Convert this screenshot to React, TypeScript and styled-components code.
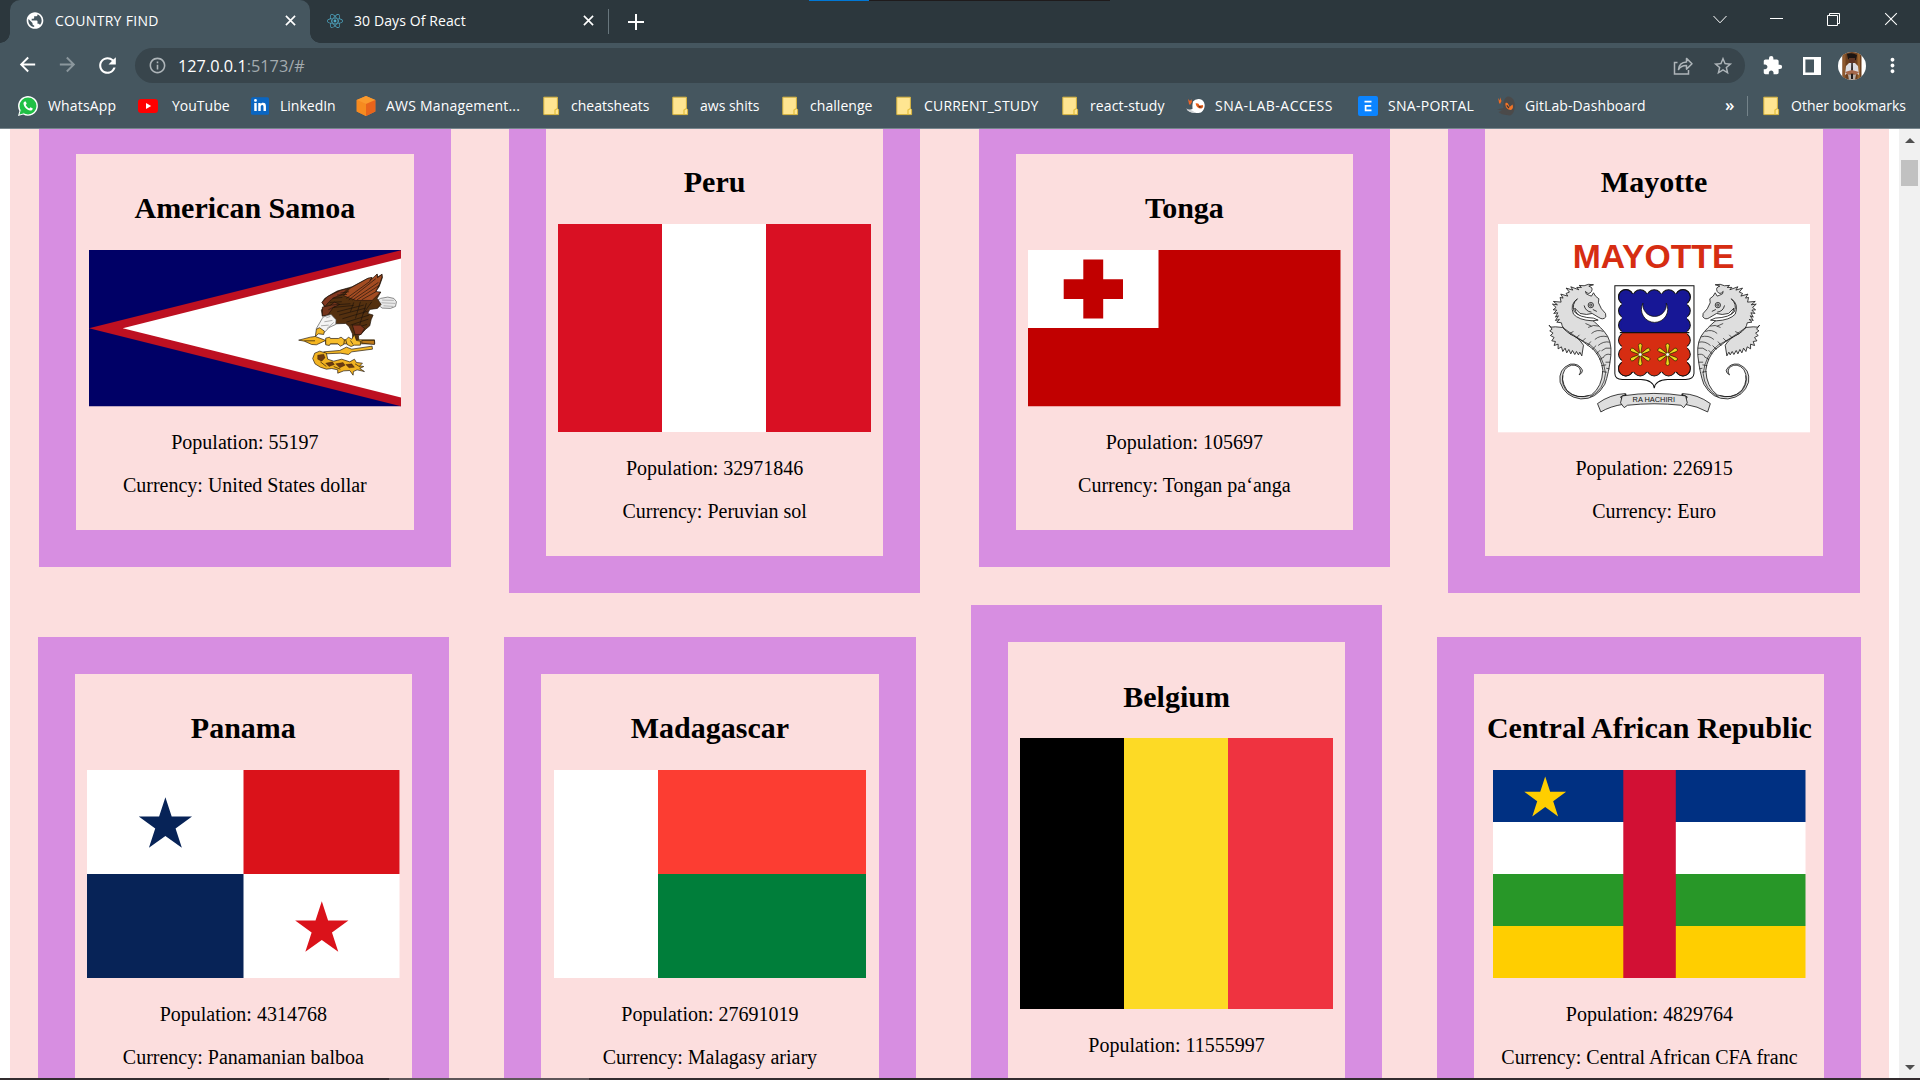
import React from 'react';
import styled, { createGlobalStyle } from 'styled-components';
import {
  MdPublic, MdArrowBack, MdArrowForward, MdRefresh, MdInfoOutline,
  MdStarBorder, MdExtension, MdMoreVert,
} from 'react-icons/md';
import { FaReact, FaLinkedinIn } from 'react-icons/fa';

const GlobalStyle = createGlobalStyle`
  * { box-sizing: border-box; }
  html, body { margin: 0; padding: 0; overflow: hidden; background: #fff; }
`;

const Window = styled.div`
  width: 1920px;
  height: 1080px;
  display: flex;
  flex-direction: column;
  overflow: hidden;
  font-family: 'Open Sans', 'Noto Sans', sans-serif;
  color: #fff;
  background: #fff;
`;

/* ---------- tab strip ---------- */

const TabStrip = styled.div`
  position: relative;
  display: flex;
  flex: none;
  height: 43px;
  padding-left: 10px;
  background: #2c373d;
`;

const TopEdge = styled.div`
  position: absolute;
  top: 0;
  left: 809px;
  width: 301px;
  height: 1px;
  background: linear-gradient(to right, #0078d7 60px, #1f1b1c 60px);
`;

const Tab = styled.div<{ $active?: boolean; $width: number }>`
  position: relative;
  display: flex;
  align-items: center;
  width: ${(p) => p.$width}px;
  height: 43px;
  padding: 0 10px 2px 15px;
  font-size: 14px;
  border-radius: 10px 10px 0 0;
  background: ${(p) => (p.$active ? '#45565f' : 'transparent')};
  ${(p) => p.$active && `
    &::before, &::after {
      content: '';
      position: absolute;
      bottom: 0;
      width: 10px;
      height: 10px;
    }
    &::before { left: -10px; background: radial-gradient(circle at 0 0, transparent 9.5px, #45565f 10px); }
    &::after { right: -10px; background: radial-gradient(circle at 100% 0, transparent 9.5px, #45565f 10px); }
  `}
`;

const Favicon = styled.span`
  display: flex;
  width: 20px;
  justify-content: center;
  svg { display: block; }
`;

const TabTitle = styled.span<{ $ls?: number; $gap: number }>`
  flex: 1;
  margin-left: ${(p) => p.$gap}px;
  white-space: nowrap;
  letter-spacing: ${(p) => p.$ls ?? 0}px;
`;

const TabDivider = styled.div`
  width: 1px;
  height: 25px;
  margin: 9px 0 0 0;
  background: #68767d;
`;

const NewTab = styled.div`
  display: flex;
  width: 54px;
  height: 43px;
  align-items: center;
  justify-content: center;
`;

const WindowControls = styled.div`
  display: flex;
  margin-left: auto;
  height: 38px;
`;

const Control = styled.div`
  display: flex;
  width: 57.2px;
  align-items: center;
  justify-content: center;
  svg { display: block; }
`;

/* ---------- toolbar ---------- */

const Toolbar = styled.div`
  display: flex;
  flex: none;
  align-items: center;
  height: 45px;
  background: #45565f;
`;

const NavButtons = styled.div`
  display: flex;
  width: 135px;
  padding-left: 7px;
`;

const NavButton = styled.div<{ $dim?: boolean }>`
  display: flex;
  width: 40px;
  justify-content: center;
  color: ${(p) => (p.$dim ? '#8b979d' : '#fff')};
`;

const Omnibox = styled.div`
  display: flex;
  align-items: center;
  width: 1610px;
  height: 35px;
  padding: 0 11px 0 13px;
  border-radius: 18px;
  background: #38454c;
  color: #aeb5b9;
  svg { flex: none; display: block; }
`;

const Url = styled.div`
  flex: 1;
  margin-left: 11px;
  font-size: 16.3px;
  color: #a3abaf;
  b { font-weight: 400; color: #fff; }
`;

const OmniboxActions = styled.div`
  display: flex;
  align-items: center;
  gap: 18px;
`;

const ToolbarActions = styled.div`
  display: flex;
  align-items: center;
  flex: 1;
  padding-left: 7px;
`;

const ActionSlot = styled.div`
  display: flex;
  width: 40px;
  justify-content: center;
  svg { display: block; }
`;

/* ---------- bookmarks ---------- */

const BookmarkBar = styled.div`
  display: flex;
  flex: none;
  height: 41px;
  padding: 0 0 5px 18px;
  align-items: center;
  background: #45565f;
  border-bottom: 1px solid #77868d;
`;

const Bookmark = styled.div<{ $width: number }>`
  display: flex;
  flex: none;
  align-items: center;
  width: ${(p) => p.$width}px;
  height: 35px;
`;

const BookmarkIcon = styled.span<{ $slot: number }>`
  flex: none;
  width: ${(p) => p.$slot}px;
  svg { display: block; }
`;

const BookmarkLabel = styled.span<{ $ls?: number }>`
  font-size: 14px;
  line-height: 20px;
  letter-spacing: ${(p) => p.$ls ?? 0}px;
  white-space: nowrap;
`;

const Overflow = styled.div`
  width: 22px;
  padding-bottom: 3px;
  font-size: 17px;
  font-weight: 600;
`;

const BarDivider = styled.div`
  width: 1px;
  height: 20px;
  margin-right: 15px;
  background: #74838a;
`;

/* ---------- page ---------- */

const Viewport = styled.div`
  display: flex;
  flex: none;
  height: 949px;
  overflow: hidden;
  background: #fff;
`;

const Countries = styled.div`
  display: flex;
  flex: none;
  flex-wrap: wrap;
  align-content: flex-start;
  align-items: center;
  justify-content: space-around;
  row-gap: 12.5px;
  width: 1879px;
  height: 1100px;
  margin: -38px 10px 0;
  background: #fcdede;
`;

const Backdrop = styled.div`
  width: 1899px;
`;

const Card = styled.article`
  padding: 12.5px;
  border: 37px solid #d78ee1;
  font-family: 'Liberation Serif', 'Times New Roman', serif;
  text-align: center;
  color: #000;
`;

const CountryName = styled.h2`
  margin: 24.9px 0;
  font-size: 30px;
  line-height: 34px;
  font-weight: 700;
  white-space: nowrap;
`;

const FlagFrame = styled.div<{ $height: number }>`
  width: 312.5px;
  height: ${(p) => p.$height}px;
  margin: 0 auto 24.6px;
  svg { display: block; width: 100%; height: 100%; }
`;

const Fact = styled.p`
  min-height: 23px;
  margin: 20px 0;
  font-size: 20px;
  line-height: 23px;
  white-space: nowrap;
`;

const Scrollbar = styled.div`
  display: flex;
  flex-direction: column;
  align-items: center;
  justify-content: space-between;
  width: 21px;
  height: 949px;
  padding: 9px 0 8px;
  background: #f1f1f1;
`;

const ScrollTop = styled.div`
  display: flex;
  flex-direction: column;
  align-items: center;
  gap: 17px;
`;

const Arrow = styled.div<{ $down?: boolean }>`
  width: 0;
  height: 0;
  border-left: 5px solid transparent;
  border-right: 5px solid transparent;
  ${(p) => (p.$down ? 'border-top' : 'border-bottom')}: 5px solid #505050;
`;

const Thumb = styled.div`
  width: 17px;
  height: 26px;
  background: #c1c1c1;
`;

const BottomEdge = styled.div`
  flex: none;
  height: 2px;
  background: linear-gradient(to right, #332c2f 389px, #5e5659 389px, #5e5659 589px, #332c2f 589px);
`;

/* ---------- icons ---------- */

const Cross = ({ size, weight }: { size: number; weight: number }) => (
  <svg width={size} height={size} viewBox="0 0 12 12" fill="none" stroke="#fff" strokeWidth={weight}>
    <path d="M1 1L11 11M11 1L1 11" />
  </svg>
);

const FolderIcon = () => (
  <svg width="17" height="20" viewBox="0 0 17 20">
    <path d="M.8 1.2H14.4V12.5L15.6 13.5V18.6H.8Z" fill="#ffe591" stroke="#d9b640" strokeWidth="1" />
    <path d="M12 18.4V14L14.4 12.6" fill="none" stroke="#e5bf3c" strokeWidth="1.2" />
  </svg>
);

const WhatsAppIcon = () => (
  <svg width="20" height="20" viewBox="0 0 20 20">
    <path d="M0 20L1.4 14.9A9.9 9.9 0 1 1 5.2 18.6Z" fill="#fff" />
    <circle cx="10" cy="10" r="8.5" fill="#20c045" />
    <path d="M1.6 18.4L2.7 14L6 17.3Z" fill="#20c045" />
    <path d="M7 5.4C6 5.5 5.4 6.6 5.5 7.7C6 11 9 14 12.2 14.6C13.6 14.7 14.8 13.7 14.8 12.4L12.5 11.2L11.4 12.5C9.6 11.8 8.4 10.6 7.7 9L8.7 7.8L7.8 5.5Z" fill="#fff" />
  </svg>
);

const YouTubeIcon = () => (
  <svg width="20" height="20" viewBox="0 0 20 20">
    <rect x="0" y="3" width="20" height="14" rx="3.2" fill="#f00" />
    <path d="M8 7L13.2 10L8 13Z" fill="#fff" />
  </svg>
);

const LinkedInIcon = () => (
  <svg width="20" height="20" viewBox="0 0 20 20">
    <rect x="1" y="1.2" width="18" height="17.6" rx="1.5" fill="#0a66c2" />
    <FaLinkedinIn x="3.2" y="3" size={13.6} color="#fff" />
  </svg>
);

const AwsIcon = () => (
  <svg width="20" height="20" viewBox="0 0 20 20">
    <path d="M10 0L19.3 4V15.6L10 20L.7 15.6V4Z" fill="#f58536" />
    <path d="M10 0L19.3 4L10 8L.7 4Z" fill="#fa9a2c" />
    <path d="M10 8L19.3 4V15.6L10 20Z" fill="#e8641b" />
    <path d="M.7 4L10 8V20L.7 15.6Z" fill="#f68b1f" />
  </svg>
);

const BirdIcon = ({ dark }: { dark?: boolean }) => (
  <svg width="20" height="20" viewBox="0 0 20 20">
    {dark ? (
      <>
        <path d="M12 .5C17 1 19 5 18.8 10S17 19 13.5 19.5C9 18.5 6 19 2.5 16L6 14.5L1 13.5L7.5 12C7 7 8 1.5 12 .5Z" fill="#4b4a4a" />
        <path d="M2.2 2L4 4.5V1.2L5.5 5L4 8L3 6.8Z" fill="#f26a21" />
        <path d="M9.5 7C11.5 6 12.5 8 13.5 11L16.5 8.5C17.5 11 17 13 15 14C11.5 14 8.8 11 9.5 7Z" fill="#f37426" />
        <path d="M10.8 9.3L13 12" stroke="#3b3433" strokeWidth="1.2" />
      </>
    ) : (
      <>
        <path d="M7 5.5Q9 2.8 13 3Q18 3.6 18.7 9Q18.8 14 15 16.4Q7 18 1 14.5L6.5 13Q6 9 7 5.5Z" fill="#fff" />
        <path d="M2 3L4 5L5.5 3.2L6 6L4 9L3 8Z" fill="#f06529" />
        <path d="M9.5 7.5Q12.5 6.5 13.5 9.5L16.8 9Q18 11 15.5 12.5Q11 13 9.5 7.5Z" fill="#e8601c" />
        <path d="M12 9.4L16.5 11L13.5 11.8Z" fill="#5d2c1a" />
        <path d="M0 12.5L6 14.5L10 17Q4 17.6 0 12.5Z" fill="#cfd3d5" />
      </>
    )}
  </svg>
);

const PortalIcon = () => (
  <svg width="20" height="20" viewBox="0 0 20 20">
    <rect width="20" height="20" rx="2" fill="#0b84ff" />
    <path d="M6.5 5.7H13.5M6.8 9.8H13.2M7.6 9V14.3H13.5" fill="none" stroke="#fff" strokeWidth="1.7" />
  </svg>
);

const ShareIcon = () => (
  <svg width="21" height="20" viewBox="0 0 21 20" fill="none" stroke="#aeb5b9" strokeWidth="1.5">
    <path d="M4.5 6.5H1.5V18H15.5V14" />
    <path d="M5.5 13.5C6 8.5 9 6.2 13.5 6V2.4L19 7.8L13.5 13.1V9.6C10 9.5 7.5 10.5 5.5 13.5Z" strokeLinejoin="round" />
  </svg>
);

const Avatar = () => (
  <svg width="28" height="28" viewBox="0 0 28 28">
    <defs>
      <clipPath id="avatar"><circle cx="14" cy="14" r="14" /></clipPath>
    </defs>
    <g clipPath="url(#avatar)">
      <rect width="28" height="28" fill="#fff" />
      <rect x="4.5" width="19" height="28" fill="#6d401f" />
      <rect x="4.5" width="3" height="28" fill="#8d592f" />
      <rect x="19.5" width="2.5" height="28" fill="#9a642f" />
      <path d="M9 2Q14 0 19 3L18 8Q14 10 10 7Z" fill="#1c1513" />
      <path d="M11 6H17V10L14 12L11 10Z" fill="#5d3525" />
      <path d="M8 14L11 11H17L20 14L21 23L18 21H10L7 23Z" fill="#dcdde2" />
      <path d="M13.3 11H14.8L15 20H13Z" fill="#2a2422" />
      <path d="M7 20L14 18L21 20L18 23L14 21L10 23Z" fill="#a5674a" />
      <path d="M10 22.5H18L17 28H11Z" fill="#b5aca6" />
      <path d="M13 22H15V27H13Z" fill="#201b1a" />
    </g>
  </svg>
);

/* ---------- flags ---------- */

const star = (cx: number, cy: number, r: number) =>
  Array.from({ length: 10 }, (_, i) => {
    const a = -Math.PI / 2 + (i * Math.PI) / 5;
    const d = i % 2 ? r * 0.382 : r;
    return `${(cx + d * Math.cos(a)).toFixed(2)},${(cy + d * Math.sin(a)).toFixed(2)}`;
  }).join(' ');

const SamoaFlag = () => (
  <svg viewBox="-573 15 936 468" preserveAspectRatio="none">
    <rect x="-573" y="15" width="936" height="468" fill="#006" />
    <path d="M363 15L-573 249L363 483Z" fill="#bd1021" />
    <path d="M363 40L-472 249L363 457Z" fill="#fff" />
    <g stroke="#1d120a" strokeWidth="2" strokeLinejoin="round">
      <path d="M287 168L300 160L322 156L340 160L348 170L345 184L330 190L305 189L294 180Z" fill="#e9e9e9" stroke="#555" />
      <path d="M305 165L340 166M303 173L344 175M309 182L338 184" stroke="#999" fill="none" />
      <path d="M125 172L133 160L152 148L170 138L198 130L215 125L262 100L274 98L278 104L290 88L292 96L304 88L306 97L296 125L284 142L301 141L290 160L302 178L291 190L268 193L262 205L278 210L272 224L268 242L256 252L243 266L234 272L236 292L218 290L216 266L206 244L196 235L166 236L164 222L146 208L126 213L123 195L132 184Z" fill="#54300f" />
      <path d="M190 152L208 130L262 100L275 97L268 107L290 87L291 98L305 88L304 98L296 120L286 139L300 142L275 166L226 166Z" fill="#a34c22" />
      <path d="M125 172L142 154L180 136L203 130L184 149L160 158L146 170L134 184Z" fill="#823820" />
      <path d="M126 186L150 181L162 171L178 178L158 188L143 209L126 213Z" fill="#74351c" />
      <path d="M198 160L270 108M205 165L286 101M216 165L294 112M230 164L296 121M244 164L288 139M180 144L206 140M170 150L200 148M156 160L186 157M148 172L184 170M150 180L210 176M160 187L220 181M170 200L250 180M176 210L256 189M186 221L262 198M198 231L266 210M210 240L264 222M218 250L260 238M144 194L164 184M220 172L210 200M240 170L225 220M258 174L238 238M274 170L248 206" fill="none" />
      <path d="M216 240L224 268L242 268L252 250L240 240Z" fill="#7f351d" />
      <path d="M128 216L152 208L167 224L166 238L146 247L132 262L114 260L108 250Z" fill="#f4f4f4" stroke="#555" />
      <path d="M138 218L150 214M132 230L156 226M122 242L145 240M140 250L160 232" stroke="#888" fill="none" />
      <path d="M108 252L118 248L132 258L130 268L114 266L105 274Z" fill="#f4b929" />
      <path d="M55 285L90 276L105 274L136 286L108 299L94 298L72 288Z" fill="#f5b51f" />
      <path d="M136 284H282L283 296H136Z" fill="#e8ac20" />
      <path d="M136 279L148 276L150 280H174L182 276L192 284L190 298L180 303L172 296H150L147 301L136 299Z" fill="#f7bd2c" />
      <path d="M196 284L204 276L214 282L222 268L228 286L240 288V300L222 300L212 304L200 298Z" fill="#f7bd2c" />
      <path d="M244 286H282L282 298L244 294Z" fill="#c07c1c" />
      <path d="M130 320L178 316L198 306L214 312L275 303L276 312L214 320L204 328L180 324L134 326Z" fill="#f5b827" />
      <path d="M97 340L103 324L118 318L138 324L142 342L160 348L184 342L208 350L222 342L228 352L246 354L238 362L250 364L238 370L252 379L230 374L219 379L218 390L208 376L190 377L172 384L172 374L154 370L138 372L120 366L104 356Z" fill="#f2b322" />
      <path d="M112 330L130 327L134 338L124 348L112 342ZM136 354L156 350L162 358L146 364ZM166 356L188 352L194 360L178 368ZM196 358L214 356L222 366L206 368Z" fill="#6b3a12" strokeWidth="1" />
      <path d="M72 287H104M210 286L218 298M120 350L138 364M160 364L180 372M224 356L240 366" fill="none" />
    </g>
  </svg>
);

const Seahorse = () => (
  <g fill="#dedede" stroke="#111" strokeWidth="2.4" strokeLinejoin="round">
    <path d="M57 285L62 291L76 290L98 292Q112 302 120 312Q140 316 160 345L155 377L149 366L145 374L139 364L134 373L127 361L122 371L116 358L110 368L105 354L98 364L94 350L84 356L84 342L72 346L76 334L65 332L72 322L61 316L69 309L59 302L66 297Z" />
    <path d="M190 164Q174 160 162 167L147 166L154 172L140 172L146 179L122 170L128 180L108 174L118 186L108 190L113 198L92 192L99 204L90 202L93 216L70 214L82 224L67 222L78 232L69 239L80 240L71 250L83 248L76 261L85 257L76 271L88 268L80 276L94 278Q96 296 118 310Q160 332 190 358Q214 384 218 420Q216 470 184 494Q140 510 110 480Q88 446 104 418Q124 396 145 410Q156 422 147 434Q158 428 157 420Q146 398 120 402Q84 416 90 456Q104 500 152 506Q198 508 224 462Q236 430 242 376Q246 330 222 304Q200 280 186 270L165 264Q136 256 134 234L150 250Q170 256 186 250L206 262Q219 271 227 260L226 250Q212 238 205 218L206 206L196 198L190 188L184 198L178 196Q164 192 166 184Q176 196 184 184Q190 172 176 168Z" />
    <path d="M142 206Q124 222 132 244Q146 262 190 264L204 270L186 272Q146 270 130 252Q118 222 142 206Z" fill="#fff" />
    <path d="M162 226Q166 244 184 246M188 238L200 244" fill="none" />
    <circle cx="182" cy="225" r="8" />
    <circle cx="182" cy="225" r="3.4" />
    <path d="M98 292Q150 330 180 344Q220 374 226 430Q222 478 180 500M118 310L130 304M138 324L148 314M156 334L166 324M172 346L182 334M186 358L198 346M198 372L210 360M208 388L222 380M214 406L228 404M216 424L230 426M166 280L184 288M174 292Q190 282 206 288M184 310Q200 296 220 304M194 328Q210 314 232 320M204 346Q220 332 239 336M214 362Q226 350 242 354M220 380Q230 368 242 374M226 396L240 396M228 414L238 416M98 436Q92 464 114 486Q140 506 176 496" fill="none" strokeWidth="2" />
  </g>
);

const Blossom = ({ x, y }: { x: number; y: number }) => (
  <g transform={`translate(${x} ${y})`} stroke="#2a2100" strokeWidth="2">
    {[0, 60, 120, 180, 240, 300].map((a) => (
      <path key={a} transform={`rotate(${a})`} d="M-1.5 -3L-5.5 -27Q-5 -33 0 -33Q5 -33 5.5 -27L1.5 -3Z" fill="#ecd71c" />
    ))}
    <circle r="5" fill="#fff" strokeWidth="1" />
  </g>
);

const scallopX = [287, 330, 372, 415, 458];

const MayotteFlag = () => (
  <svg viewBox="-96 -18 936 624" preserveAspectRatio="none">
    <rect x="-96" y="-18" width="936" height="624" fill="#fff" />
    <text x="128" y="113" fontFamily="'Liberation Sans', Arial, sans-serif" fontWeight="700" fontSize="98" textLength="484" lengthAdjust="spacingAndGlyphs" fill="#d62d12">MAYOTTE</text>
    <Seahorse />
    <g transform="translate(744.5 0) scale(-1 1)"><Seahorse /></g>
    <path d="M254 167H491V430Q490 447 466 448H412Q374 450 372 474Q370 450 332 448H276Q254 447 254 430Z" fill="#fff" stroke="#111" strokeWidth="3" />
    <g stroke="#111" strokeWidth="3">
      {[200, 242, 285].map((y) => [287, 458].map((x) => <circle key={`${x}-${y}`} cx={x} cy={y} r="22" fill="#171796" />))}
      {scallopX.map((x) => <circle key={x} cx={x} cy="201" r="22" fill="#171796" />)}
      {[330, 372, 415].map((y) => [287, 458].map((x) => <circle key={`${x}-${y}`} cx={x} cy={y} r="22" fill="#d62d12" />))}
      {scallopX.map((x) => <circle key={x} cx={x} cy="415" r="22" fill="#d62d12" />)}
    </g>
    <rect x="275" y="191" width="195" height="116" fill="#171796" />
    <rect x="275" y="308" width="195" height="117" fill="#d62d12" />
    <path d="M269 307.5H477" stroke="#111" strokeWidth="3.5" />
    <path d="M338 219A39.5 39.5 0 1 0 408 219A35.3 35.3 0 1 1 338 219Z" fill="#fff" stroke="#111" strokeWidth="2.4" />
    <Blossom x={330} y={373} />
    <Blossom x={412} y={373} />
    <g fill="#dedede" stroke="#111" strokeWidth="2.4" strokeLinejoin="round">
      <path d="M202 520Q240 492 286 490L280 522Q240 528 212 545Z" />
      <path d="M540 520Q502 492 456 490L464 522Q502 528 532 545Z" />
      <path d="M271 500L288 492L276 508ZM471 500L454 492L466 508Z" fill="#888" />
      <path d="M276 497Q371 482 466 497L471 518L460 532L452 525Q371 516 292 525L282 532L271 518Z" />
    </g>
    <text x="307" y="516" fontFamily="'Liberation Sans', Arial, sans-serif" fontSize="24" textLength="127" lengthAdjust="spacingAndGlyphs" fill="#111">RA HACHIRI</text>
  </svg>
);

const PeruFlag = () => (
  <svg viewBox="0 0 3 2" preserveAspectRatio="none" shapeRendering="crispEdges">
    <rect width="3" height="2" fill="#d91023" />
    <rect x="1" width="1" height="2" fill="#fff" />
  </svg>
);

const TongaFlag = () => (
  <svg viewBox="0 0 312.5 156.25" preserveAspectRatio="none">
    <rect width="312.5" height="156.25" fill="#c10000" />
    <rect width="130.5" height="78" fill="#fff" />
    <path d="M55.3 9.5H75.2V29.3H95V49H75.2V68.6H55.3V49H35.7V29.3H55.3Z" fill="#c10000" />
  </svg>
);

const PanamaFlag = () => (
  <svg viewBox="0 0 312.5 208.3" preserveAspectRatio="none">
    <rect width="312.5" height="208.3" fill="#fff" />
    <rect x="156.5" width="156" height="104" fill="#da121a" />
    <rect y="104" width="156.5" height="104.3" fill="#072357" />
    <polygon points={star(78.4, 55.2, 28)} fill="#072357" />
    <polygon points={star(234.8, 159.2, 28)} fill="#da121a" />
  </svg>
);

const MadagascarFlag = () => (
  <svg viewBox="0 0 3 2" preserveAspectRatio="none" shapeRendering="crispEdges">
    <rect width="3" height="2" fill="#fff" />
    <rect x="1" width="2" height="1" fill="#fc3d32" />
    <rect x="1" y="1" width="2" height="1" fill="#007e3a" />
  </svg>
);

const BelgiumFlag = () => (
  <svg viewBox="0 0 3 2" preserveAspectRatio="none" shapeRendering="crispEdges">
    <rect width="1" height="2" fill="#000" />
    <rect x="1" width="1" height="2" fill="#fdda25" />
    <rect x="2" width="1" height="2" fill="#ef3340" />
  </svg>
);

const CarFlag = () => (
  <svg viewBox="0 0 312.5 208.3" preserveAspectRatio="none">
    <rect width="312.5" height="52" fill="#003082" />
    <rect y="52" width="312.5" height="52" fill="#fff" />
    <rect y="104" width="312.5" height="52" fill="#289728" />
    <rect y="156" width="312.5" height="52.3" fill="#ffce00" />
    <rect x="130.3" width="52.5" height="208.3" fill="#d21034" />
    <polygon points={star(52.2, 28.6, 22)} fill="#ffce00" />
  </svg>
);

/* ---------- data ---------- */

type Country = { name: string; population: number; currency?: string; height: number; Flag: React.FC };

const countries: Country[] = [
  { name: 'American Samoa', population: 55197, currency: 'United States dollar', height: 156.25, Flag: SamoaFlag },
  { name: 'Peru', population: 32971846, currency: 'Peruvian sol', height: 208.3, Flag: PeruFlag },
  { name: 'Tonga', population: 105697, currency: 'Tongan paʻanga', height: 156.25, Flag: TongaFlag },
  { name: 'Mayotte', population: 226915, currency: 'Euro', height: 208.3, Flag: MayotteFlag },
  { name: 'Panama', population: 4314768, currency: 'Panamanian balboa', height: 208.3, Flag: PanamaFlag },
  { name: 'Madagascar', population: 27691019, currency: 'Malagasy ariary', height: 208.3, Flag: MadagascarFlag },
  { name: 'Belgium', population: 11555997, height: 271, Flag: BelgiumFlag },
  { name: 'Central African Republic', population: 4829764, currency: 'Central African CFA franc', height: 208.3, Flag: CarFlag },
];

type Mark = { label: string; icon: React.ReactNode; width: number; slot: number; ls?: number };

const bookmarks: Mark[] = [
  { label: 'WhatsApp', icon: <WhatsAppIcon />, width: 120, slot: 30, ls: 0.15 },
  { label: 'YouTube', icon: <YouTubeIcon />, width: 112, slot: 34 },
  { label: 'LinkedIn', icon: <LinkedInIcon />, width: 106, slot: 30 },
  { label: 'AWS Management...', icon: <AwsIcon />, width: 187, slot: 30, ls: 0.2 },
  { label: 'cheatsheats', icon: <FolderIcon />, width: 129, slot: 28 },
  { label: 'aws shits', icon: <FolderIcon />, width: 110, slot: 28 },
  { label: 'challenge', icon: <FolderIcon />, width: 114, slot: 28, ls: 0.05 },
  { label: 'CURRENT_STUDY', icon: <FolderIcon />, width: 166, slot: 28, ls: 0.2 },
  { label: 'react-study', icon: <FolderIcon />, width: 124, slot: 28, ls: 0.1 },
  { label: 'SNA-LAB-ACCESS', icon: <BirdIcon />, width: 172, slot: 29, ls: 0.5 },
  { label: 'SNA-PORTAL', icon: <PortalIcon />, width: 138, slot: 30, ls: 0.28 },
  { label: 'GitLab-Dashboard', icon: <BirdIcon dark />, width: 229, slot: 29, ls: 0.1 },
];

export default function App() {
  return (
    <Window>
      <GlobalStyle />
      <TabStrip>
        <TopEdge />
        <Tab $active $width={300}>
          <Favicon><MdPublic size={21} /></Favicon>
          <TabTitle $gap={10} $ls={0.3}>COUNTRY FIND</TabTitle>
          <Favicon><Cross size={11} weight={1.8} /></Favicon>
        </Tab>
        <Tab $width={298}>
          <Favicon><FaReact size={16} color="#4ea8c4" /></Favicon>
          <TabTitle $gap={9} $ls={0.1}>30 Days Of React</TabTitle>
          <Favicon><Cross size={11} weight={1.8} /></Favicon>
        </Tab>
        <TabDivider />
        <NewTab>
          <svg width="16" height="16" viewBox="0 0 16 16" stroke="#fff" strokeWidth="2"><path d="M8 0V16M0 8H16" /></svg>
        </NewTab>
        <WindowControls>
          <Control>
            <svg width="14" height="9" viewBox="0 0 14 9" fill="none" stroke="#fff"><path d="M.5 1L7 7.8L13.5 1" /></svg>
          </Control>
          <Control>
            <svg width="14" height="13" viewBox="0 0 14 13" stroke="#fff"><path d="M0 5.5H13" /></svg>
          </Control>
          <Control>
            <svg width="14" height="13" viewBox="0 0 14 13" fill="none" stroke="#fff"><path d="M.5 2.5H10.5V12.5H.5ZM2.5 2.5V.5H12.5V10.5H10.5" /></svg>
          </Control>
          <Control><Cross size={14} weight={0.9} /></Control>
        </WindowControls>
      </TabStrip>

      <Toolbar>
        <NavButtons>
          <NavButton><MdArrowBack size={23} /></NavButton>
          <NavButton $dim><MdArrowForward size={23} /></NavButton>
          <NavButton><MdRefresh size={25} /></NavButton>
        </NavButtons>
        <Omnibox>
          <MdInfoOutline size={19} />
          <Url><b>127.0.0.1</b>:5173/#</Url>
          <OmniboxActions>
            <ShareIcon />
            <MdStarBorder size={22} />
          </OmniboxActions>
        </Omnibox>
        <ToolbarActions>
          <ActionSlot><MdExtension size={21} /></ActionSlot>
          <ActionSlot>
            <svg width="18" height="18" viewBox="0 0 18 18"><path d="M0 0H18V18H0ZM2.4 2.4V15.6H11V2.4Z" fill="#fff" fillRule="evenodd" /></svg>
          </ActionSlot>
          <ActionSlot><Avatar /></ActionSlot>
          <ActionSlot><MdMoreVert size={23} /></ActionSlot>
        </ToolbarActions>
      </Toolbar>

      <BookmarkBar>
        {bookmarks.map((b) => (
          <Bookmark key={b.label} $width={b.width}>
            <BookmarkIcon $slot={b.slot}>{b.icon}</BookmarkIcon>
            <BookmarkLabel $ls={b.ls}>{b.label}</BookmarkLabel>
          </Bookmark>
        ))}
        <Overflow>»</Overflow>
        <BarDivider />
        <Bookmark $width={150}>
          <BookmarkIcon $slot={28}><FolderIcon /></BookmarkIcon>
          <BookmarkLabel>Other bookmarks</BookmarkLabel>
        </Bookmark>
      </BookmarkBar>

      <Viewport>
        <Backdrop>
          <Countries>
            {countries.map(({ name, population, currency, height, Flag }) => (
              <Card key={name}>
                <CountryName>{name}</CountryName>
                <FlagFrame $height={height}><Flag /></FlagFrame>
                <Fact>Population: {population}</Fact>
                <Fact>{currency && `Currency: ${currency}`}</Fact>
              </Card>
            ))}
          </Countries>
        </Backdrop>
        <Scrollbar>
          <ScrollTop>
            <Arrow />
            <Thumb />
          </ScrollTop>
          <Arrow $down />
        </Scrollbar>
      </Viewport>
      <BottomEdge />
    </Window>
  );
}
